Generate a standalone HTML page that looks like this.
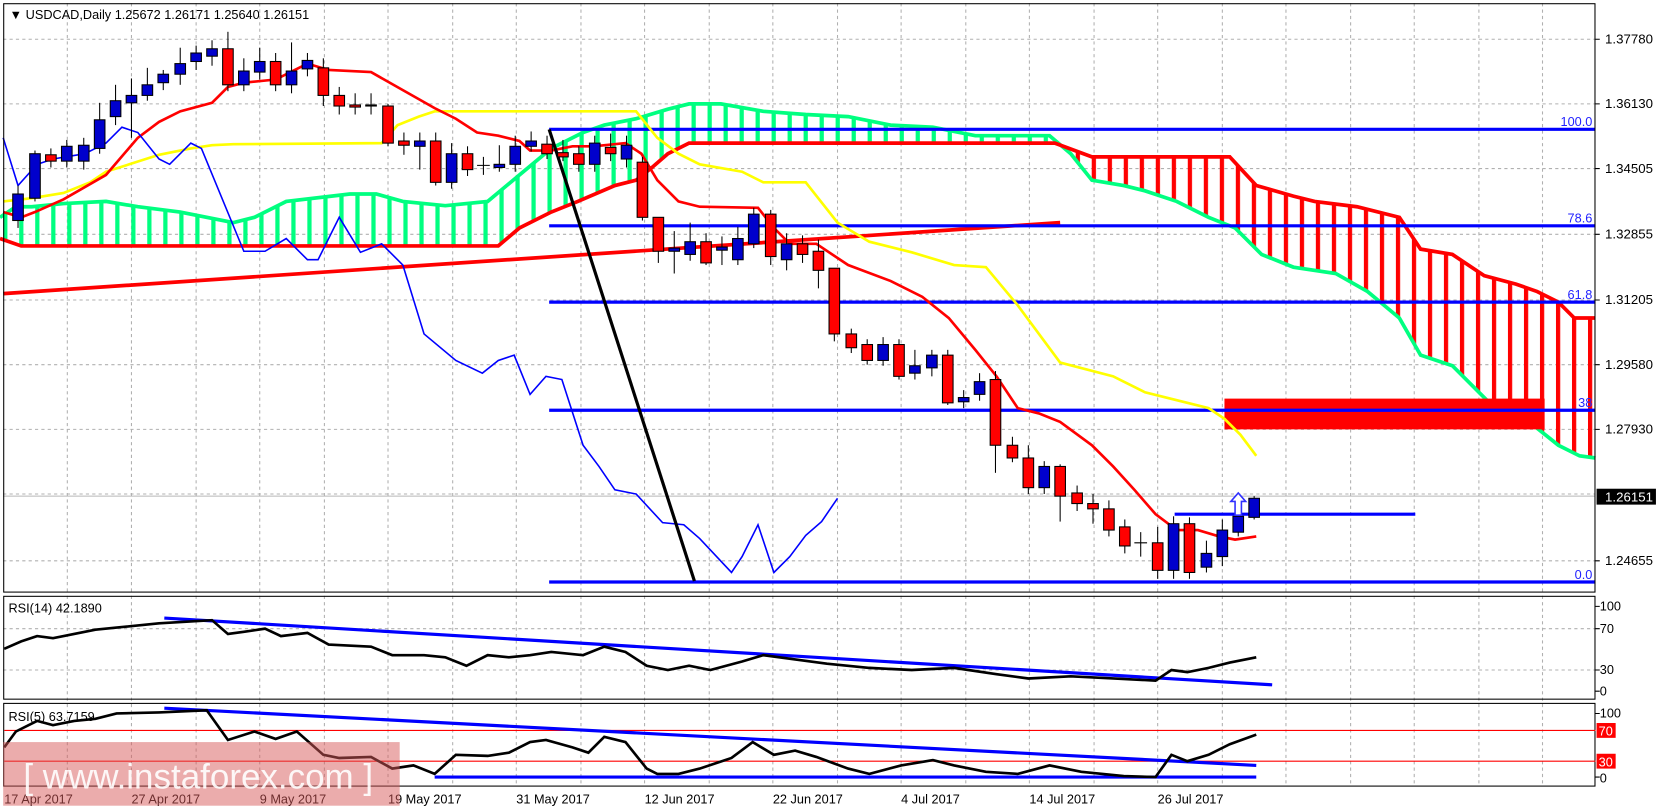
<!DOCTYPE html>
<html><head><meta charset="utf-8"><style>
html,body{margin:0;padding:0;background:#fff;overflow:hidden}
svg{display:block}
text{font-family:"Liberation Sans",sans-serif}
</style></head><body>
<svg width="1657" height="811" viewBox="0 0 1563 765" preserveAspectRatio="none" xmlns="http://www.w3.org/2000/svg">
<defs>
<pattern id="pg" x="3" y="0" width="15.1" height="10" patternUnits="userSpaceOnUse"><rect x="0" y="0" width="4" height="10" fill="#00ff80"/></pattern>
<pattern id="pr" x="3" y="0" width="15.1" height="10" patternUnits="userSpaceOnUse"><rect x="0" y="0" width="4" height="10" fill="#ff0000"/></pattern>
</defs>
<rect width="1563" height="765" fill="#fff"/>
<!-- grid -->
<g stroke="#b0b0b0" stroke-dasharray="3,3" stroke-width="1">
<path d="M63.5 3V558M124 3V558M185 3V558M245 3V558M306 3V558M366 3V558M427 3V558M487 3V558M548 3V558M608 3V558M669 3V558M729 3V558M790 3V558M850 3V558M911 3V558M971 3V558M1032 3V558M1092 3V558M1153 3V558M1213 3V558M1274 3V558M1334 3V558M1395 3V558M1455 3V558"/>
<path d="M63.5 562V742M124 562V742M185 562V742M245 562V742M306 562V742M366 562V742M427 562V742M487 562V742M548 562V742M608 562V742M669 562V742M729 562V742M790 562V742M850 562V742M911 562V742M971 562V742M1032 562V742M1092 562V742M1153 562V742M1213 562V742M1274 562V742M1334 562V742M1395 562V742M1455 562V742"/>
<path d="M3 37H1505M3 98H1505M3 159H1505M3 221H1505M3 283H1505M3 344H1505M3 405H1505M3 466H1505M3 529H1505"/>
<path d="M3 593H1505M3 632H1505"/>
</g>
<line x1="3" y1="468" x2="1505" y2="468" stroke="#b8b8b8"/>
<!-- cloud fill -->
<polygon fill="url(#pg)" points="0,205 15,195 30,195 60,192 100,190 130,195 170,200 220,210 240,205 270,190 330,183 355,183 380,190 420,194 460,190 490,165 520,140 550,125 570,118 600,112 630,103 650,98 680,98 720,105 760,108 800,110 840,118 880,120 920,128 960,128 990,128 995,135 670,135 650,135 630,145 615,158 600,170 580,175 545,190 520,200 490,215 470,232 20,232 0,225"/>
<polygon fill="url(#pr)" points="995,135 1030,148 1160,148 1185,175 1220,185 1240,190 1280,195 1320,205 1340,235 1370,240 1400,260 1430,268 1450,275 1470,285 1485,300 1505,300 1505,432 1490,430 1470,420 1445,400 1420,395 1400,375 1370,345 1340,335 1320,300 1290,275 1260,258 1220,252 1190,240 1165,215 1140,205 1110,190 1080,180 1060,175 1030,170 1010,145"/>
<polyline fill="none" stroke="#00ff80" stroke-width="3.5" points="0,205 15,195 30,195 60,192 100,190 130,195 170,200 220,210 240,205 270,190 330,183 355,183 380,190 420,194 460,190 490,165 520,140 550,125 570,118 600,112 630,103 650,98 680,98 720,105 760,108 800,110 840,118 880,120 920,128 960,128 990,128 1010,145 1030,170 1060,175 1080,180 1110,190 1140,205 1165,215 1190,240 1220,252 1260,258 1290,275 1320,300 1340,335 1370,345 1400,375 1420,395 1445,400 1470,420 1490,430 1505,432"/>
<polyline fill="none" stroke="#ff0000" stroke-width="3.5" points="0,225 20,232 470,232 490,215 520,200 545,190 580,175 600,170 615,158 630,145 650,135 670,135 995,135 1030,148 1160,148 1185,175 1220,185 1240,190 1280,195 1320,205 1340,235 1370,240 1400,260 1430,268 1450,275 1470,285 1485,300 1505,300"/>
<!-- red rect -->
<rect x="1155" y="376" width="302" height="29" fill="#ff0000"/>
<!-- trend red -->
<line x1="3" y1="277" x2="1000" y2="210" stroke="#ff0000" stroke-width="3.5"/>
<!-- fib lines -->
<g stroke="#0000ff" stroke-width="3">
<line x1="518" y1="122" x2="1505" y2="122"/><line x1="518" y1="213" x2="1505" y2="213"/><line x1="518" y1="285" x2="1505" y2="285"/><line x1="518" y1="387" x2="1505" y2="387"/><line x1="518" y1="549" x2="1505" y2="549"/>
<line x1="1108" y1="485" x2="1335" y2="485"/>
</g>
<g fill="#2222ff" font-size="12" text-anchor="end">
<text x="1502" y="119">100.0</text><text x="1502" y="210">78.6</text><text x="1502" y="282">61.8</text><text x="1502" y="384">38</text><text x="1502" y="546">0.0</text>
</g>
<!-- kijun yellow -->
<polyline fill="none" stroke="#ffff00" stroke-width="2.5" points="3,190 30,187 60,182 85,172 100,162 150,146 180,140 200,137 220,136 360,135 375,118 395,110 410,105 600,105 620,130 640,145 660,155 700,162 720,172 760,172 790,210 820,228 860,238 900,250 930,252 960,288 1000,342 1050,355 1080,370 1100,375 1140,385 1155,395 1170,410 1185,430"/>
<!-- tenkan red -->
<polyline fill="none" stroke="#ff0000" stroke-width="2.5" points="3,200 20,205 33,200 60,188 100,165 130,130 150,115 170,105 200,97 215,82 230,78 260,75 280,65 290,60 310,66 350,68 380,85 410,102 430,112 450,125 470,128 490,133 500,142 520,142 540,138 560,138 590,135 605,145 620,170 640,190 660,195 715,196 730,215 745,230 770,230 800,250 840,265 870,280 895,300 920,330 940,355 960,385 980,390 1000,398 1030,420 1050,440 1070,462 1090,485 1110,500 1130,500 1150,506 1165,509 1185,506"/>
<!-- chikou blue -->
<polyline fill="none" stroke="#0000ff" stroke-width="1.5" points="3,130 17,175 35,155 50,150 80,145 100,135 115,120 130,125 150,150 160,155 180,135 190,140 230,237 250,237 270,225 290,245 300,245 320,205 340,238 360,230 380,250 400,315 430,340 455,352 470,340 485,335 500,372 515,355 530,358 550,420 565,440 580,462 600,466 625,493 645,495 660,508 690,540 700,525 715,495 730,540 745,525 760,505 775,492 790,470"/>
<!-- black line -->
<line x1="518" y1="122" x2="655" y2="548" stroke="#000" stroke-width="3"/>
<!-- candles -->
<g stroke="#000" stroke-width="1">
<g fill="#0000cc">
<line x1="17" y1="175" x2="17" y2="215"/><rect x="12" y="183" width="10" height="25"/>
<line x1="33" y1="142" x2="33" y2="190"/><rect x="28" y="145" width="10" height="42"/>
<line x1="63" y1="132" x2="63" y2="158"/><rect x="58" y="138" width="10" height="14"/>
<line x1="79" y1="130" x2="79" y2="160"/><rect x="74" y="137" width="10" height="15"/>
<line x1="94" y1="97" x2="94" y2="145"/><rect x="89" y="113" width="10" height="27"/>
<line x1="109" y1="80" x2="109" y2="118"/><rect x="104" y="95" width="10" height="15"/>
<line x1="124" y1="74" x2="124" y2="130"/><rect x="119" y="90" width="10" height="7"/>
<line x1="139" y1="64" x2="139" y2="95"/><rect x="134" y="80" width="10" height="10"/>
<line x1="154" y1="66" x2="154" y2="85"/><rect x="149" y="70" width="10" height="8"/>
<line x1="170" y1="45" x2="170" y2="80"/><rect x="165" y="60" width="10" height="10"/>
<line x1="185" y1="43" x2="185" y2="66"/><rect x="180" y="50" width="10" height="8"/>
<line x1="200" y1="38" x2="200" y2="62"/><rect x="195" y="46" width="10" height="7"/>
<line x1="230" y1="55" x2="230" y2="86"/><rect x="225" y="67" width="10" height="13"/>
<line x1="245" y1="45" x2="245" y2="75"/><rect x="240" y="58" width="10" height="10"/>
<line x1="275" y1="40" x2="275" y2="88"/><rect x="270" y="67" width="10" height="13"/>
<line x1="290" y1="50" x2="290" y2="72"/><rect x="285" y="57" width="10" height="8"/>
<line x1="396" y1="125" x2="396" y2="160"/><rect x="391" y="133" width="10" height="5"/>
<line x1="426" y1="135" x2="426" y2="178"/><rect x="421" y="145" width="10" height="27"/>
<line x1="471" y1="137" x2="471" y2="162"/><rect x="466" y="155" width="10" height="3"/>
<line x1="486" y1="128" x2="486" y2="162"/><rect x="481" y="138" width="10" height="17"/>
<line x1="501" y1="124" x2="501" y2="143"/><rect x="496" y="133" width="10" height="5"/>
<line x1="561" y1="128" x2="561" y2="162"/><rect x="556" y="135" width="10" height="20"/>
<line x1="591" y1="128" x2="591" y2="158"/><rect x="586" y="137" width="10" height="13"/>
<line x1="636" y1="218" x2="636" y2="258"/><rect x="631" y="234" width="10" height="3"/>
<line x1="651" y1="210" x2="651" y2="246"/><rect x="646" y="228" width="10" height="12"/>
<line x1="681" y1="223" x2="681" y2="250"/><rect x="676" y="233" width="10" height="3"/>
<line x1="696" y1="214" x2="696" y2="250"/><rect x="691" y="225" width="10" height="20"/>
<line x1="711" y1="196" x2="711" y2="234"/><rect x="706" y="202" width="10" height="28"/>
<line x1="742" y1="220" x2="742" y2="255"/><rect x="737" y="230" width="10" height="15"/>
<line x1="833" y1="318" x2="833" y2="345"/><rect x="828" y="325" width="10" height="15"/>
<line x1="863" y1="330" x2="863" y2="358"/><rect x="858" y="345" width="10" height="7"/>
<line x1="879" y1="330" x2="879" y2="355"/><rect x="874" y="335" width="10" height="12"/>
<line x1="909" y1="368" x2="909" y2="385"/><rect x="904" y="375" width="10" height="4"/>
<line x1="924" y1="352" x2="924" y2="378"/><rect x="919" y="360" width="10" height="12"/>
<line x1="985" y1="435" x2="985" y2="466"/><rect x="980" y="440" width="10" height="20"/>
<line x1="1107" y1="487" x2="1107" y2="546"/><rect x="1102" y="494" width="10" height="44"/>
<line x1="1138" y1="510" x2="1138" y2="540"/><rect x="1133" y="522" width="10" height="13"/>
<line x1="1153" y1="490" x2="1153" y2="534"/><rect x="1148" y="500" width="10" height="25"/>
<line x1="1168" y1="478" x2="1168" y2="506"/><rect x="1163" y="487" width="10" height="15"/>
<line x1="1183" y1="468" x2="1183" y2="490"/><rect x="1178" y="470" width="10" height="18"/>
</g>
<g fill="#ff0000">
<line x1="48" y1="140" x2="48" y2="158"/><rect x="43" y="146" width="10" height="6"/>
<line x1="215" y1="30" x2="215" y2="86"/><rect x="210" y="46" width="10" height="34"/>
<line x1="260" y1="50" x2="260" y2="86"/><rect x="255" y="58" width="10" height="22"/>
<line x1="305" y1="55" x2="305" y2="100"/><rect x="300" y="64" width="10" height="26"/>
<line x1="320" y1="82" x2="320" y2="108"/><rect x="315" y="90" width="10" height="10"/>
<line x1="335" y1="88" x2="335" y2="108"/><rect x="330" y="99" width="10" height="2"/>
<line x1="350" y1="88" x2="350" y2="108"/><rect x="345" y="99" width="10" height="1"/>
<line x1="366" y1="98" x2="366" y2="138"/><rect x="361" y="100" width="10" height="35"/>
<line x1="381" y1="125" x2="381" y2="146"/><rect x="376" y="133" width="10" height="4"/>
<line x1="411" y1="125" x2="411" y2="175"/><rect x="406" y="133" width="10" height="39"/>
<line x1="441" y1="138" x2="441" y2="166"/><rect x="436" y="145" width="10" height="15"/>
<line x1="516" y1="128" x2="516" y2="150"/><rect x="511" y="136" width="10" height="9"/>
<line x1="531" y1="132" x2="531" y2="152"/><rect x="526" y="144" width="10" height="4"/>
<line x1="546" y1="138" x2="546" y2="162"/><rect x="541" y="145" width="10" height="10"/>
<line x1="576" y1="126" x2="576" y2="152"/><rect x="571" y="139" width="10" height="6"/>
<line x1="606" y1="148" x2="606" y2="208"/><rect x="601" y="153" width="10" height="52"/>
<line x1="621" y1="205" x2="621" y2="248"/><rect x="616" y="205" width="10" height="32"/>
<line x1="666" y1="220" x2="666" y2="250"/><rect x="661" y="228" width="10" height="20"/>
<line x1="727" y1="198" x2="727" y2="250"/><rect x="722" y="202" width="10" height="40"/>
<line x1="757" y1="222" x2="757" y2="248"/><rect x="752" y="230" width="10" height="10"/>
<line x1="772" y1="226" x2="772" y2="272"/><rect x="767" y="237" width="10" height="18"/>
<line x1="787" y1="253" x2="787" y2="322"/><rect x="782" y="253" width="10" height="62"/>
<line x1="803" y1="310" x2="803" y2="333"/><rect x="798" y="315" width="10" height="13"/>
<line x1="818" y1="320" x2="818" y2="344"/><rect x="813" y="325" width="10" height="15"/>
<line x1="848" y1="320" x2="848" y2="358"/><rect x="843" y="325" width="10" height="30"/>
<line x1="894" y1="330" x2="894" y2="382"/><rect x="889" y="335" width="10" height="45"/>
<line x1="939" y1="350" x2="939" y2="446"/><rect x="934" y="358" width="10" height="62"/>
<line x1="955" y1="412" x2="955" y2="436"/><rect x="950" y="420" width="10" height="12"/>
<line x1="970" y1="420" x2="970" y2="466"/><rect x="965" y="432" width="10" height="28"/>
<line x1="1000" y1="438" x2="1000" y2="492"/><rect x="995" y="440" width="10" height="28"/>
<line x1="1016" y1="458" x2="1016" y2="482"/><rect x="1011" y="465" width="10" height="10"/>
<line x1="1031" y1="466" x2="1031" y2="494"/><rect x="1026" y="475" width="10" height="5"/>
<line x1="1046" y1="472" x2="1046" y2="506"/><rect x="1041" y="480" width="10" height="20"/>
<line x1="1061" y1="490" x2="1061" y2="522"/><rect x="1056" y="497" width="10" height="18"/>
<line x1="1092" y1="497" x2="1092" y2="546"/><rect x="1087" y="512" width="10" height="26"/>
<line x1="1122" y1="488" x2="1122" y2="546"/><rect x="1117" y="494" width="10" height="46"/>
</g>
<path d="M450 156H462M456 148V165M1070 512H1082M1076 502V525" fill="none"/>
</g>
<!-- up arrow -->
<path d="M1168 465L1175 473H1171V486H1165V473H1161Z" fill="#fff" stroke="#3030ff" stroke-width="1.5"/>
<!-- frames -->
<g fill="none" stroke="#000" stroke-width="1">
<rect x="3.5" y="3.5" width="1501" height="555"/>
<rect x="3.5" y="562.5" width="1501" height="97"/>
<rect x="3.5" y="663.5" width="1501" height="78"/>
</g>
<g stroke="#000"><path d="M1505 37h4M1505 98h4M1505 159h4M1505 221h4M1505 283h4M1505 344h4M1505 405h4M1505 529h4M1505 572h4M1505 593h4M1505 632h4M1505 652h4M1505 673h4M1505 733h4"/></g>
<g font-size="12.5" fill="#000">
<text x="1514" y="41">1.37780</text><text x="1514" y="102">1.36130</text><text x="1514" y="163">1.34505</text><text x="1514" y="225">1.32855</text><text x="1514" y="287">1.31205</text><text x="1514" y="348">1.29580</text><text x="1514" y="409">1.27930</text><text x="1514" y="533">1.24655</text>
</g>
<rect x="1506" y="461" width="56" height="15" fill="#000"/>
<text x="1514" y="473" font-size="12.5" fill="#fff">1.26151</text>
<text x="9" y="18" font-size="12" fill="#000">▼  USDCAD,Daily  1.25672 1.26171 1.25640 1.26151</text>
<!-- RSI14 -->
<text x="8" y="578" font-size="12" fill="#000">RSI(14) 42.1890</text>
<g font-size="12" fill="#000"><text x="1509" y="576">100</text><text x="1509" y="597">70</text><text x="1509" y="636">30</text><text x="1509" y="656">0</text></g>
<line x1="155" y1="583" x2="1200" y2="646" stroke="#0000ff" stroke-width="3"/>
<polyline fill="none" stroke="#000" stroke-width="2.5" points="4,612 20,605 35,600 50,602 70,598 90,594 110,592 150,588 200,585 215,598 230,596 250,593 265,600 290,597 310,608 350,610 370,618 400,618 420,620 440,628 460,618 480,620 500,618 520,615 550,618 570,610 590,615 610,628 630,632 650,628 670,632 700,624 720,618 750,622 780,626 820,630 860,632 900,630 940,636 970,640 1010,638 1050,640 1090,642 1105,632 1120,634 1140,630 1160,625 1185,620"/>
<!-- RSI5 -->
<line x1="4" y1="689" x2="1505" y2="689" stroke="#ff0000"/>
<line x1="4" y1="718" x2="1505" y2="718" stroke="#ff0000"/>
<line x1="155" y1="668" x2="1185" y2="722" stroke="#0000ff" stroke-width="3"/>
<line x1="410" y1="733" x2="1185" y2="733" stroke="#0000ff" stroke-width="3"/>
<polyline fill="none" stroke="#000" stroke-width="2.5" points="4,705 15,690 35,680 50,684 70,680 90,678 110,673 150,672 195,670 215,698 240,690 260,697 280,690 305,712 320,715 350,714 370,725 390,722 410,730 430,712 460,713 480,710 500,700 515,698 540,705 555,710 570,695 590,700 610,725 620,730 640,730 660,725 690,715 710,700 730,712 750,708 770,714 800,725 820,730 850,722 880,717 900,722 930,728 960,730 990,722 1020,728 1060,732 1090,733 1105,712 1120,718 1140,712 1160,702 1185,693"/>
<text x="8" y="680" font-size="12" fill="#000">RSI(5) 63.7159</text>
<g font-size="12"><text x="1509" y="677" fill="#000">100</text><rect x="1506" y="682" width="18" height="14" fill="#ff0000"/><text x="1508" y="694" fill="#fff">70</text><rect x="1506" y="711" width="18" height="14" fill="#ff0000"/><text x="1508" y="723" fill="#fff">30</text><text x="1509" y="738" fill="#000">0</text></g>
<!-- dates -->
<g font-size="12" fill="#000"><text x="4" y="758">17 Apr 2017</text><text x="124" y="758">27 Apr 2017</text><text x="245" y="758">9 May 2017</text><text x="366" y="758">19 May 2017</text><text x="487" y="758">31 May 2017</text><text x="608" y="758">12 Jun 2017</text><text x="729" y="758">22 Jun 2017</text><text x="850" y="758">4 Jul 2017</text><text x="971" y="758">14 Jul 2017</text><text x="1092" y="758">26 Jul 2017</text></g>
<!-- watermark -->
<rect x="3" y="700" width="374" height="60" fill="#d85a5a" fill-opacity="0.5"/>
<text x="22" y="744" font-size="33" fill="#fff" fill-opacity="0.9">[ www.instaforex.com ]</text>
</svg>
</body></html>
